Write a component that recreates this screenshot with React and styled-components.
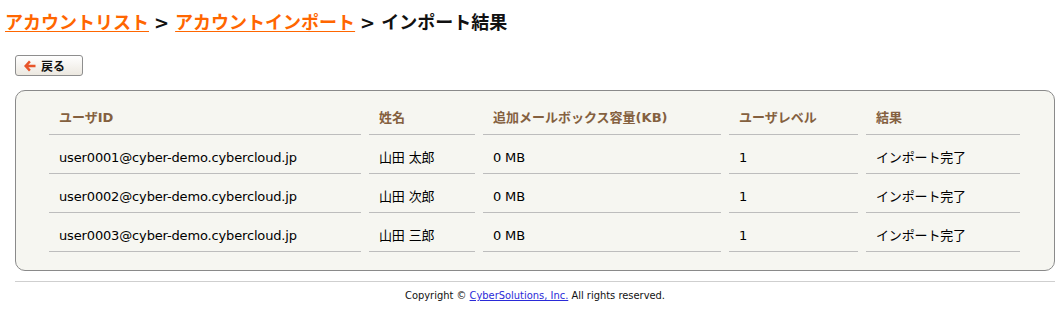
import React from 'react'
import styled, { createGlobalStyle } from 'styled-components'

const Global = createGlobalStyle`
    body {
        margin: 0;
        background: #fff;
        font-family: "DejaVu Sans", "Noto Sans CJK JP", sans-serif;
        color: #000;
    }
`

const rows = [
    { id: 'user0001@cyber-demo.cybercloud.jp', name: '山田 太郎', box: '0 MB', level: '1', result: 'インポート完了' },
    { id: 'user0002@cyber-demo.cybercloud.jp', name: '山田 次郎', box: '0 MB', level: '1', result: 'インポート完了' },
    { id: 'user0003@cyber-demo.cybercloud.jp', name: '山田 三郎', box: '0 MB', level: '1', result: 'インポート完了' },
]

const cols = [
    { label: 'ユーザID', width: 292 },
    { label: '姓名', width: 86 },
    { label: '追加メールボックス容量(KB)', width: 218 },
    { label: 'ユーザレベル', width: 109 },
    { label: '結果', width: 134 },
]

const App = () => {
    return (
        <Page>
            <Global />
            <Title>
                <Crumb href="#">アカウントリスト</Crumb>
                <Sep>&gt;</Sep>
                <Crumb href="#">アカウントインポート</Crumb>
                <Sep>&gt;</Sep>
                インポート結果
            </Title>

            <BackButton type="button">
                <svg width="13" height="12" viewBox="0 0 13 12">
                    <path d="M6 0.5 L1 6 L6 11.5 L7.8 9.7 L5.4 7.3 L12.5 7.3 L12.5 4.7 L5.4 4.7 L7.8 2.3 Z" fill="#e8552a" />
                </svg>
                戻る
            </BackButton>

            <Panel>
                <Table>
                    <thead>
                        <tr>
                            {cols.map((c, idx) => (
                                <Th key={idx} style={{ width: c.width }}>{c.label}</Th>
                            ))}
                        </tr>
                    </thead>
                    <tbody>
                        {rows.map((r, idx) => (
                            <tr key={idx}>
                                <Td>{r.id}</Td>
                                <Td>{r.name}</Td>
                                <Td>{r.box}</Td>
                                <Td>{r.level}</Td>
                                <Td>{r.result}</Td>
                            </tr>
                        ))}
                    </tbody>
                </Table>
            </Panel>

            <Footer>
                Copyright © <FootLink href="#">CyberSolutions, Inc.</FootLink> All rights reserved.
            </Footer>
        </Page>
    );
}

const Page = styled.div`
    padding: 11px 5px 10px 5px;
`

const Title = styled.h1`
    margin: 0;
    font-size: 18px;
    line-height: 24px;
    font-weight: bold;
    color: #111;
    white-space: nowrap;
`

const Crumb = styled.a`
    color: #ff6600;
    text-decoration: underline;
    text-underline-offset: 2px;
`

const Sep = styled.span`
    margin: 0 6px 0 5px;
`

const BackButton = styled.button`
    display: flex;
    align-items: center;
    gap: 5px;
    margin: 20px 0 0 10px;
    width: 68px;
    height: 21px;
    padding: 0 0 0 7px;
    border: 1px solid #8e8e8e;
    border-radius: 3px;
    background: linear-gradient(#ffffff, #ece8e0);
    font-family: "DejaVu Sans", "Noto Sans CJK JP", sans-serif;
    font-size: 12px;
    font-weight: bold;
    color: #111;
    cursor: pointer;
`

const Panel = styled.div`
    margin: 14px 0 0 10px;
    width: 1040px;
    box-sizing: border-box;
    padding: 5px 25px 10px 25px;
    border: 1px solid #8a8a8a;
    border-radius: 10px;
    background: #f6f6f1;
`

const Table = styled.table`
    border-collapse: separate;
    border-spacing: 8px;
    table-layout: fixed;
`

const Th = styled.th`
    text-align: left;
    padding: 5px 10px 7px 10px;
    line-height: 18px;
    font-size: 13px;
    font-weight: bold;
    color: #84603f;
    border-bottom: 1px solid #bdbdbd;
`

const Td = styled.td`
    padding: 6px 10px;
    line-height: 18px;
    font-size: 13px;
    letter-spacing: -0.15px;
    color: #000;
    border-bottom: 1px solid #bdbdbd;
    white-space: nowrap;
`

const Footer = styled.div`
    margin: 10px 0 0 10px;
    width: 1040px;
    border-top: 1px solid #cfcfcf;
    padding-top: 7px;
    text-align: center;
    font-family: "DejaVu Sans Condensed", "DejaVu Sans", sans-serif;
    font-size: 11px;
    line-height: 14px;
    color: #111;
`

const FootLink = styled.a`
    color: #2a2ad8;
    text-decoration: underline;
`

export default App
